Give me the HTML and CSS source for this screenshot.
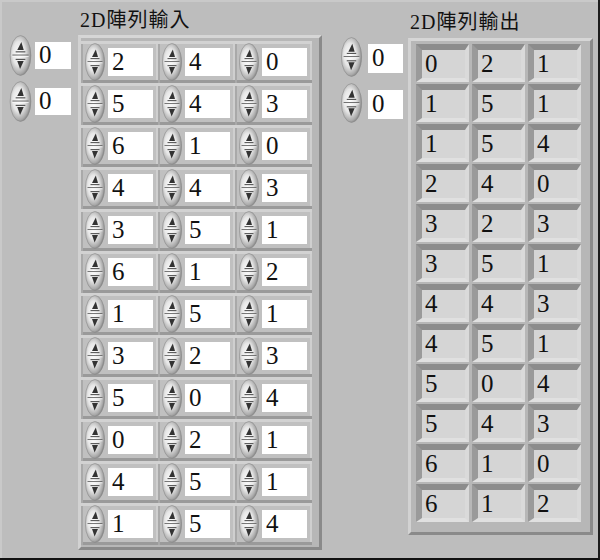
FILE: index.html
```html
<!DOCTYPE html>
<html>
<head>
<meta charset="utf-8">
<link rel="stylesheet" href="styles.css">
</head>
<body>
<svg width="0" height="0" class="defs">
  <defs>
    <radialGradient id="sg" cx="0.42" cy="0.45" r="0.6">
      <stop offset="0" stop-color="#ffffff"/>
      <stop offset="0.5" stop-color="#e6e6e6"/>
      <stop offset="0.85" stop-color="#a8a8a8"/>
      <stop offset="1" stop-color="#7c7c7c"/>
    </radialGradient>
    <symbol id="spin" viewBox="0 0 20 38">
      <ellipse cx="10" cy="19" rx="9.6" ry="18.5" fill="url(#sg)" stroke="#8a8a8a" stroke-width="0.6"/>
      <line x1="2.5" y1="18.6" x2="17.5" y2="18.6" stroke="#6a6a6a" stroke-width="1"/>
      <line x1="2.5" y1="19.8" x2="17.5" y2="19.8" stroke="#fafafa" stroke-width="0.8"/>
      <polygon points="10.8,6.5 7,14 13,14" fill="#333"/>
      <line x1="5.5" y1="15.6" x2="14.5" y2="15.6" stroke="#555" stroke-width="1.1"/>
      <line x1="5.5" y1="22.6" x2="14.5" y2="22.6" stroke="#555" stroke-width="1.1"/>
      <polygon points="7,24 13,24 9.6,31.5" fill="#333"/>
    </symbol>
  </defs>
</svg>
<div class="page">
  <section class="cluster cluster-in">
    <div class="label label-in">2D陣列輸入</div>
    <div class="body">
      <div class="index index-in">
        <div class="ctl"><svg class="spin-big"><use href="#spin"/></svg><div class="num">0</div></div>
        <div class="ctl"><svg class="spin-big"><use href="#spin"/></svg><div class="num">0</div></div>
      </div>
      <div class="frame frame-in" id="fin"></div>
    </div>
  </section>
  <section class="cluster cluster-out">
    <div class="label label-out">2D陣列輸出</div>
    <div class="body">
      <div class="index index-out">
        <div class="ctl"><svg class="spin-big"><use href="#spin"/></svg><div class="num">0</div></div>
        <div class="ctl"><svg class="spin-big"><use href="#spin"/></svg><div class="num">0</div></div>
      </div>
      <div class="frame frame-out" id="fout"></div>
    </div>
  </section>
</div>
<script src="script.js"></script>
</body>
</html>
```
FILE: script.js
```js
var inData = [[2,4,0],[5,4,3],[6,1,0],[4,4,3],[3,5,1],[6,1,2],[1,5,1],[3,2,3],[5,0,4],[0,2,1],[4,5,1],[1,5,4]];
var outData = [[0,2,1],[1,5,1],[1,5,4],[2,4,0],[3,2,3],[3,5,1],[4,4,3],[4,5,1],[5,0,4],[5,4,3],[6,1,0],[6,1,2]];
var fin = document.getElementById('fin');
inData.forEach(function (row) {
  row.forEach(function (v) {
    var c = document.createElement('div');
    c.className = 'icell';
    c.innerHTML = '<svg class="spin-small"><use href="#spin"/></svg><div class="num ibox">' + v + '</div>';
    fin.appendChild(c);
  });
});
var fout = document.getElementById('fout');
outData.forEach(function (row) {
  row.forEach(function (v) {
    var c = document.createElement('div');
    c.className = 'ocell';
    c.innerHTML = '<div class="obox">' + v + '</div>';
    fout.appendChild(c);
  });
});
```
FILE: styles.css
```css
html, body {
  margin: 0;
  padding: 0;
}
body {
  width: 600px;
  height: 560px;
  overflow: hidden;
  background: #bdbdbd;
  font-family: "Liberation Serif", "Times New Roman", "DejaVu Serif", serif;
}
.defs {
  position: absolute;
}
.page {
  box-sizing: border-box;
  width: 600px;
  height: 560px;
  background: #bdbdbd;
  border-right: 2px solid #1c1c1c;
  border-bottom: 2px solid #111;
  display: flex;
  align-items: flex-start;
  box-shadow: inset 2px 2px 0 #c9c9c9;
}
.cluster {
  display: flex;
  flex-direction: column;
}
.cluster-in {
  margin-left: 5px;
}
.cluster-out {
  margin-left: 15px;
}
.label {
  box-sizing: border-box;
  font-family: "Liberation Serif", "Noto Sans CJK TC", serif;
  font-size: 20px;
  line-height: 24px;
  letter-spacing: 1px;
  color: #111;
  white-space: nowrap;
}
.label-in {
  height: 35px;
  padding-top: 8px;
  padding-left: 75px;
}
.label-out {
  height: 38px;
  padding-top: 10px;
  padding-left: 73px;
}
.body {
  display: flex;
  align-items: flex-start;
}
.index {
  display: flex;
  flex-direction: column;
}
.index-in {
  width: 73px;
  margin-top: -3px;
}
.index-out {
  width: 71px;
  margin-top: -4px;
}
.ctl {
  height: 46px;
  display: flex;
  align-items: center;
  padding-left: 3px;
}
.spin-big {
  width: 25px;
  height: 41px;
  flex: none;
}
.index-out .spin-big {
  width: 23px;
  height: 40px;
}
.num {
  box-sizing: border-box;
  background: #fff;
  font-family: "Liberation Serif", "Times New Roman", "DejaVu Serif", serif;
  font-size: 25px;
  font-weight: normal;
  line-height: 28px;
  color: #111;
  padding-left: 4px;
}
.index-in .num {
  width: 36px;
  height: 27px;
  line-height: 26px;
  margin-left: 2px;
}
.index-out .num {
  width: 35px;
  height: 29px;
  line-height: 27px;
  margin-left: 5px;
  margin-top: 2px;
}
.frame {
  box-sizing: border-box;
  display: grid;
  border-style: solid;
  border-width: 3px;
  border-color: #d6d6d6 #8a8a8a #8a8a8a #d2d2d2;
  background: #b7b7b7;
}
.frame-in {
  width: 244px;
  height: 515px;
  grid-template-columns: repeat(3, 77px);
  grid-auto-rows: 42px;
  padding: 3px 7px 2px 0;
}
.icell {
  display: flex;
  align-items: center;
  padding-left: 4px;
  background: #c0c0c0;
  box-shadow: inset 0 3px 0 #d2d2d2, inset 2px 0 0 #a9a9a9, inset 0 -3px 0 #9a9a9a, inset -2px 0 0 #cfcfcf;
}
.spin-small {
  width: 20px;
  height: 38px;
  flex: none;
}
.ibox {
  width: 45px;
  height: 28px;
  margin-left: 3px;
}
.frame-out {
  width: 185px;
  height: 497px;
  grid-template-columns: repeat(3, 56px);
  grid-auto-rows: 40px;
  padding: 3px 6px 8px 5px;
}
.ocell {
  width: 53px;
  height: 38px;
  box-sizing: border-box;
  border-style: solid;
  border-width: 6px 4px 4px 6px;
  border-color: #8c8c8c #dadada #e0e0e0 #9a9a9a;
}
.obox {
  box-sizing: border-box;
  width: 43px;
  height: 28px;
  background: #d5d5d5;
  font-family: "Liberation Serif", "Times New Roman", "DejaVu Serif", serif;
  font-size: 25px;
  line-height: 28px;
  color: #111;
  padding-left: 3px;
}
```
